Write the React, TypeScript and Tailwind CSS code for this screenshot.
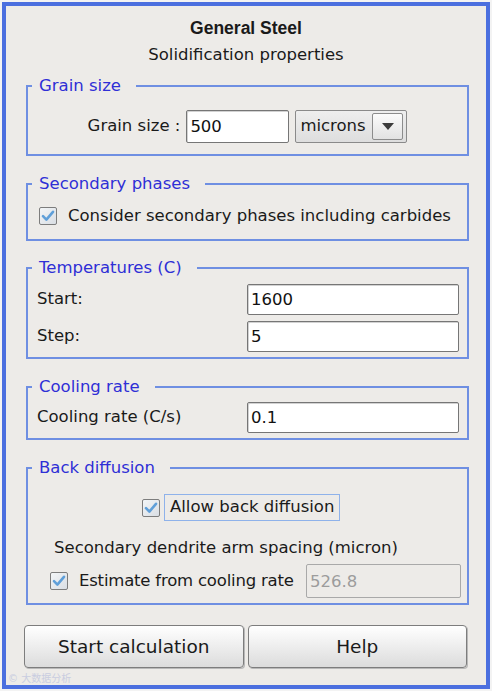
import type { ReactNode } from 'react';

function CheckBox() {
  return (
    <svg width="18" height="18" viewBox="0 0 18 18" className="shrink-0">
      <defs>
        <linearGradient id="cbg" x1="0" y1="0" x2="1" y2="1">
          <stop offset="0" stopColor="#f4f6f8" />
          <stop offset="1" stopColor="#d8dde3" />
        </linearGradient>
      </defs>
      <rect x="0.5" y="0.5" width="17" height="17" rx="1.5" fill="url(#cbg)" stroke="#7d7d7d" />
      <path d="M4 9.2 L7.4 12.6 L14 4.8" fill="none" stroke="#5f9fd9" strokeWidth="2.6" strokeLinecap="round" strokeLinejoin="round" />
    </svg>
  );
}

function Group({ title, className, children }: { title: string; className?: string; children: ReactNode }) {
  return (
    <fieldset className={`w-[443px] border-2 border-[#6f8fe2] px-[4px] ${className ?? ''}`}>
      <legend className="pl-[7px] pr-[15px] leading-[18px] text-[#2f2fd6]">{title}</legend>
      {children}
    </fieldset>
  );
}

function TextBox({ value, className }: { value: string; className?: string }) {
  return (
    <input
      readOnly
      defaultValue={value}
      className={`h-[31px] rounded-[2px] border border-[#767676] bg-white px-[3px] text-[#111] shadow-[inset_1px_1px_0_#d2d2d2] outline-none ${className ?? ''}`}
    />
  );
}

export default function App() {
  return (
    <div
      className="h-[691px] w-[492px] bg-[#f3f3f3] p-[2px] text-[16.5px] text-[#1a1a1a]"
      style={{ fontFamily: '"DejaVu Sans", "Noto Sans CJK SC", sans-serif' }}
    >
      <div className="relative h-full border-4 border-[#4b6fdf] bg-[#edebe8]">
        <div className="flex flex-col items-center pt-[11px]">
          <div className="text-[17.5px] font-bold leading-[22px]" style={{ fontFamily: '"Liberation Sans", Arial, sans-serif' }}>
            General Steel
          </div>
          <div className="mt-[5px] leading-[22px]">Solidification properties</div>
        </div>

        <div className="ml-[20px] flex flex-col">
          <Group title="Grain size" className="mt-[11px] pt-[15px] pb-[11px]">
            <div className="flex items-center justify-center gap-[6px]">
              <span>Grain size :</span>
              <TextBox value="500" className="h-[33px] w-[103px]" />
              <div className="flex h-[33px] w-[112px] items-center justify-between rounded-[2px] border border-[#8a8a8a] bg-gradient-to-b from-[#eeeeee] to-[#dedede] pl-[4px] pr-[3px]">
                <span>microns</span>
                <div className="flex h-[27px] w-[31px] items-center justify-center rounded-[2px] border border-[#8c8c8c] bg-gradient-to-b from-[#fbfbfb] to-[#e2e2e2]">
                  <svg width="12" height="7" viewBox="0 0 12 7">
                    <path d="M0 0 H12 L6 7 Z" fill="#3c3c3c" />
                  </svg>
                </div>
              </div>
            </div>
          </Group>

          <Group title="Secondary phases" className="mt-[19px] pt-[14px] pb-[14px]">
            <div className="flex h-[18px] items-center gap-[11px] pl-[7px]">
              <CheckBox />
              <span>Consider secondary phases including carbides</span>
            </div>
          </Group>

          <Group title="Temperatures (C)" className="mt-[18px] pt-[7px] pb-[5px]">
            <div className="flex flex-col gap-[6px] pl-[5px] pr-[4px]">
              <div className="flex items-center justify-between">
                <span>Start:</span>
                <TextBox value="1600" className="w-[212px]" />
              </div>
              <div className="flex items-center justify-between">
                <span>Step:</span>
                <TextBox value="5" className="w-[212px]" />
              </div>
            </div>
          </Group>

          <Group title="Cooling rate" className="mt-[19px] pt-[6px] pb-[5px]">
            <div className="flex items-center justify-between pl-[5px] pr-[4px]">
              <span>Cooling rate (C/s)</span>
              <TextBox value="0.1" className="w-[212px]" />
            </div>
          </Group>

          <Group title="Back diffusion" className="mt-[19px] pt-[17px] pb-[5px]">
            <div className="flex h-[27px] items-center pl-[110px]">
              <CheckBox />
              <span className="ml-[4px] flex h-[27px] items-center border border-[#8fb2ea] px-[5px]">Allow back diffusion</span>
            </div>
            <div className="mt-[18px] pl-[22px] leading-[18px]">Secondary dendrite arm spacing (micron)</div>
            <div className="mt-[7px] flex items-center pl-[18px]">
              <CheckBox />
              <span className="ml-[11px] whitespace-nowrap tracking-[-0.2px]">Estimate from cooling rate</span>
              <input
                readOnly
                defaultValue="526.8"
                className="ml-auto mr-[2px] h-[34px] w-[155px] shrink-0 rounded-[2px] border border-[#a9a9a9] bg-[#edebe8] px-[3px] text-[#9c9c9c] outline-none"
              />
            </div>
          </Group>

          <div className="-ml-[2px] mt-[20px] flex w-[443px] gap-[4px]">
            {['Start calculation', 'Help'].map((label) => (
              <button
                key={label}
                className="h-[43px] flex-1 rounded-[4px] border border-[#7d7d7d] bg-gradient-to-b from-[#ffffff] to-[#dcdcdc] text-[18.5px] shadow-[1px_1px_0_#b9b9b9]"
              >
                {label}
              </button>
            ))}
          </div>
        </div>

        <div className="absolute bottom-[0px] left-[2px] text-[10px] leading-[12px] text-[#c9cde0]">© 大数据分析</div>
      </div>
    </div>
  );
}
